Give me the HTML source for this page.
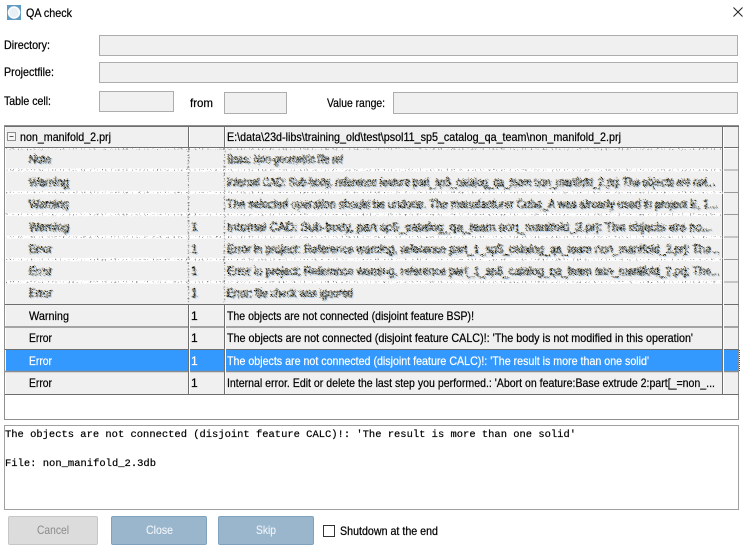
<!DOCTYPE html>
<html><head><meta charset="utf-8"><title>QA check</title>
<style>
html,body{margin:0;padding:0;background:#fff;width:750px;height:550px;overflow:hidden}
svg{display:block}
text{font-family:"Liberation Sans",sans-serif;font-size:12px;fill:#000;stroke:#000;stroke-width:.22px}
.m{font-family:"Liberation Mono",monospace;font-size:10.5px;fill:#000;stroke-width:.2px}
.w{fill:#fff;stroke:#fff}
.g{fill:#8a8a8a;stroke:none}
.l{fill:#f2f5f8;stroke:#f2f5f8;stroke-width:.1px}
.x text{stroke-width:.35px}
</style></head><body>
<svg xmlns="http://www.w3.org/2000/svg" width="750" height="550" viewBox="0 0 750 550">
<defs>
<filter id="n" x="-2%" y="-40%" width="104%" height="180%" color-interpolation-filters="sRGB">
<feTurbulence type="fractalNoise" baseFrequency="0.7" numOctaves="3" seed="4" result="t"/>
<feDisplacementMap in="SourceGraphic" in2="t" scale="5" xChannelSelector="R" yChannelSelector="G" result="d0"/>
<feTurbulence type="fractalNoise" baseFrequency="1.3" numOctaves="1" seed="11"/>
<feColorMatrix type="matrix" values="0 0 0 0 0  0 0 0 0 0  0 0 0 0 0  9 0 0 0 -3.600" result="mask"/>
<feComposite in="d0" in2="mask" operator="in" result="d"/>
<feOffset in="d" dx="-1" dy="0" result="d1"/>
<feOffset in="d" dx="1" dy="1" result="d2"/>
<feFlood flood-color="#e8b040" flood-opacity=".55"/><feComposite in2="d1" operator="in" result="c1"/>
<feFlood flood-color="#4a9ae8" flood-opacity=".55"/><feComposite in2="d2" operator="in" result="c2"/>
<feMerge><feMergeNode in="c1"/><feMergeNode in="c2"/><feMergeNode in="d"/></feMerge>
</filter>
<filter id="l" x="-2%" y="-100%" width="104%" height="300%" color-interpolation-filters="sRGB">
<feTurbulence type="fractalNoise" baseFrequency="0.8" numOctaves="2" seed="9" result="t"/>
<feDisplacementMap in="SourceGraphic" in2="t" scale="3" xChannelSelector="R" yChannelSelector="G"/>
</filter>
<filter id="s" x="-1%" y="-1%" width="102%" height="102%"><feGaussianBlur stdDeviation="0.25"/></filter>
</defs>
<rect width="750" height="550" fill="#fff"/>

<!-- title -->
<rect x="7" y="5" width="14" height="15" fill="#5f9bc2"/>
<circle cx="14" cy="12.5" r="5.5" fill="#e8f0f6" stroke="#fff" stroke-width="1.5"/>
<text x="26" y="17" textLength="46" lengthAdjust="spacingAndGlyphs">QA check</text>
<path d="M733.5 7.5l9 9M742.5 7.5l-9 9" stroke="#222" stroke-width="1" fill="none"/>

<!-- form -->
<g filter="url(#s)">
<text x="4" y="49" textLength="46" lengthAdjust="spacingAndGlyphs">Directory:</text>
<text x="4" y="76" textLength="50" lengthAdjust="spacingAndGlyphs">Projectfile:</text>
<text x="4" y="105" textLength="47" lengthAdjust="spacingAndGlyphs">Table cell:</text>
<text x="190" y="107" textLength="23" lengthAdjust="spacingAndGlyphs">from</text>
<text x="327" y="107" textLength="58" lengthAdjust="spacingAndGlyphs">Value range:</text>
</g>
<g fill="#f0f0f0" stroke="#adadad" stroke-width="1">
<rect x="99.5" y="35.5" width="638" height="20"/>
<rect x="99.5" y="62.5" width="638" height="20"/>
<rect x="99.5" y="91.5" width="74" height="20"/>
<rect x="224.5" y="92.5" width="62" height="21"/>
<rect x="393.5" y="92.5" width="344" height="21"/>
</g>

<!-- table frame -->
<rect x="4.5" y="125.5" width="734" height="294" fill="#fff" stroke="#8f8f8f"/>
<rect x="6" y="127" width="732" height="20" fill="#f0f0f0"/>
<rect x="6" y="149" width="732" height="155" fill="#f0f0f0"/>
<rect x="6" y="305" width="732" height="89" fill="#f0f0f0"/>
<rect x="6" y="350" width="732" height="21" fill="#3399ff"/>

<!-- row lines -->
<g stroke="#6e6e6e" stroke-width="1">
<path d="M5 126.5H739M5 147.500H739M5 304.500H739M5 349.500H739M5 394.500H739"/>
</g>
<g stroke="#8c8c8c" stroke-width="1.500">
<path d="M5 327H739M5 371.500H739"/>
</g>

<!-- solid column lines -->
<g stroke="#6e6e6e" stroke-width="1">
<path d="M188.500 126V148M224.500 126V148M722.500 126V394"/>
<path d="M188.500 304V394M224.500 304V394"/>
</g>
<g stroke="#fff" stroke-width="1">
<path d="M189.500 127V147M225.500 127V147M723.500 127V394M189.500 305V394M225.500 305V394"/>
</g>
<path d="M739.500 350V371" stroke="#1f5f99" stroke-width="1" stroke-dasharray="1 1"/>

<!-- noisy lines -->
<g filter="url(#l)" fill="none">
<g stroke="#fff" stroke-width="3">
<path d="M6 170H722M6 192.500H722M6 214.500H722M6 237H722M6 259.500H722M6 282H722"/>
</g>
<g stroke="#8a8a8a" stroke-width="1" stroke-dasharray="1 3 1 2 1 4 1 2 1 5">
<path d="M6 170H722M6 192.500H722M6 214.500H722M6 237H722M6 259.500H722M6 282H722M6 149H722"/>
</g>
<g stroke="#888" stroke-width="1.200" stroke-dasharray="2 1 1 2">
<path d="M188.500 148V303M224.500 148V303"/>
</g>
</g>
<g stroke="#9a9a9a" stroke-width="1">
<path d="M724 170H738M724 192.500H738M724 214.500H738M724 237H738M724 259.500H738M724 282H738"/>
</g>

<!-- noisy text -->
<g filter="url(#n)" class="x">
<text x="29" y="163" textLength="22" lengthAdjust="spacingAndGlyphs">Note</text>
<text x="29" y="186" textLength="40" lengthAdjust="spacingAndGlyphs">Warning</text>
<text x="29" y="208" textLength="40" lengthAdjust="spacingAndGlyphs">Warning</text>
<text x="29" y="231" textLength="40" lengthAdjust="spacingAndGlyphs">Warning</text>
<text x="29" y="253" textLength="23" lengthAdjust="spacingAndGlyphs">Error</text>
<text x="29" y="275" textLength="23" lengthAdjust="spacingAndGlyphs">Error</text>
<text x="29" y="297" textLength="23" lengthAdjust="spacingAndGlyphs">Error</text>
<text x="191" y="231">1</text><text x="191" y="253">1</text><text x="191" y="275">1</text><text x="191" y="297">1</text>
<text x="227" y="163" textLength="116" lengthAdjust="spacingAndGlyphs">Base: Non-geometric file ref</text>
<text x="227" y="186" textLength="488" lengthAdjust="spacingAndGlyphs">Internal CAD: Sub-body, reference feature part_sp5_catalog_qa_team non_manifold_2.prj: The objects are not...</text>
<text x="227" y="208" textLength="491" lengthAdjust="spacingAndGlyphs">The selected operation should be undone. The manufacturer Cube_A was already used in project E, 1...</text>
<text x="227" y="231" textLength="485" lengthAdjust="spacingAndGlyphs">Internal CAD: Sub-body, part sp5_catalog_qa_team non_manifold_2.prj: The objects are no...</text>
<text x="227" y="253" textLength="493" lengthAdjust="spacingAndGlyphs">Error in project: Reference warning, reference part_1_sp5_catalog_qa_team non_manifold_2.prj: The...</text>
<text x="227" y="275" textLength="493" lengthAdjust="spacingAndGlyphs">Error in project: Reference warning, reference part_1_sp5_catalog_qa_team non_manifold_2.prj: The...</text>
<text x="227" y="297" textLength="126" lengthAdjust="spacingAndGlyphs">Error: file check was ignored</text>
</g>

<!-- crisp table text -->
<g filter="url(#s)">
<rect x="7.500" y="132.500" width="8" height="8" fill="#f6f6f6" stroke="#8e8e8e"/>
<path d="M9.500 136.500h4" stroke="#555"/>
<text x="20" y="141" textLength="91" lengthAdjust="spacingAndGlyphs">non_manifold_2.prj</text>
<text x="227" y="141" textLength="394" lengthAdjust="spacingAndGlyphs">E:\data\23d-libs\training_old\test\psol11_sp5_catalog_qa_team\non_manifold_2.prj</text>

<text x="29" y="320" textLength="40" lengthAdjust="spacingAndGlyphs">Warning</text>
<text x="191" y="320">1</text>
<text x="227" y="320" textLength="247" lengthAdjust="spacingAndGlyphs">The objects are not connected (disjoint feature BSP)!</text>

<text x="29" y="342" textLength="23" lengthAdjust="spacingAndGlyphs">Error</text>
<text x="191" y="342">1</text>
<text x="227" y="342" textLength="466" lengthAdjust="spacingAndGlyphs">The objects are not connected (disjoint feature CALC)!: 'The body is not modified in this operation'</text>

<text class="w" x="29" y="365" textLength="23" lengthAdjust="spacingAndGlyphs">Error</text>
<text class="w" x="191" y="365">1</text>
<text class="w" x="227" y="365" textLength="422" lengthAdjust="spacingAndGlyphs">The objects are not connected (disjoint feature CALC)!: 'The result is more than one solid'</text>

<text x="29" y="387" textLength="23" lengthAdjust="spacingAndGlyphs">Error</text>
<text x="191" y="387">1</text>
<text x="227" y="387" textLength="488" lengthAdjust="spacingAndGlyphs">Internal error. Edit or delete the last step you performed.: 'Abort on feature:Base extrude 2:part[_=non_...</text>
</g>

<!-- message box -->
<rect x="4.500" y="425.500" width="734" height="84" fill="#fff" stroke="#a0a0a0"/>
<g filter="url(#s)">
<text class="m" x="5" y="437" textLength="571" lengthAdjust="spacingAndGlyphs">The objects are not connected (disjoint feature CALC)!: 'The result is more than one solid'</text>
<text class="m" x="5" y="466" textLength="151" lengthAdjust="spacingAndGlyphs">File: non_manifold_2.3db</text>
</g>

<!-- buttons -->
<rect x="8.500" y="516.500" width="89" height="28" rx="1.500" fill="#dcdcdc" stroke="#c6c6c6"/>
<rect x="111.500" y="516.500" width="95" height="28" rx="1.500" fill="#9ab6cd" stroke="#7fa3bf"/>
<rect x="218.500" y="516.500" width="95" height="28" rx="1.500" fill="#9ab6cd" stroke="#7fa3bf"/>
<g filter="url(#s)">
<text class="g" x="37" y="534" textLength="32" lengthAdjust="spacingAndGlyphs">Cancel</text>
<text class="l" x="146" y="534" textLength="27" lengthAdjust="spacingAndGlyphs">Close</text>
<text class="l" x="256" y="534" textLength="20" lengthAdjust="spacingAndGlyphs">Skip</text>
<text x="340" y="535" textLength="98" lengthAdjust="spacingAndGlyphs">Shutdown at the end</text>
</g>
<rect x="323.500" y="525.500" width="11" height="11" fill="#fff" stroke="#333"/>
</svg>
</body></html>
